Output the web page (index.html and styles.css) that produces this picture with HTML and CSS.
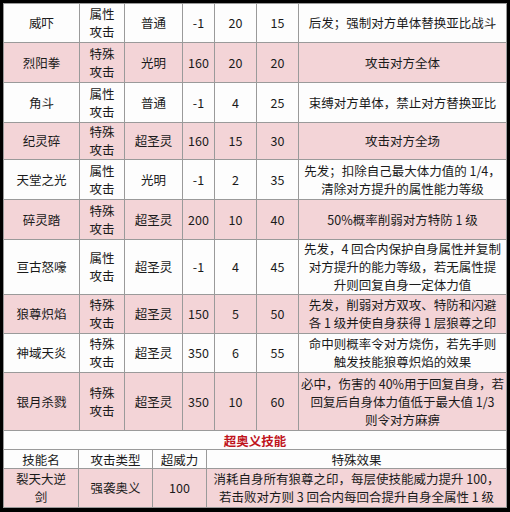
FILE: index.html
```html
<!DOCTYPE html>
<html>
<head>
<meta charset="utf-8">
<link rel="stylesheet" href="styles.css">
</head>
<body>
<div class="frame">
<table class="skills">
<colgroup>
<col class="c1"><col class="c2"><col class="c3"><col class="c4"><col class="c5"><col class="c6"><col class="c7">
</colgroup>
<tr class="w h39"><td>威吓</td><td>属性<br>攻击</td><td>普通</td><td>-1</td><td>20</td><td>15</td><td class="eff">后发；强制对方单体替换亚比战斗</td></tr>
<tr class="p h40"><td>烈阳拳</td><td>特殊<br>攻击</td><td>光明</td><td>160</td><td>20</td><td>20</td><td class="eff">攻击对方全体</td></tr>
<tr class="w h40"><td>角斗</td><td>属性<br>攻击</td><td>普通</td><td>-1</td><td>4</td><td>25</td><td class="eff">束缚对方单体，禁止对方替换亚比</td></tr>
<tr class="p h35"><td>纪灵碎</td><td>特殊<br>攻击</td><td>超圣灵</td><td>160</td><td>15</td><td>30</td><td class="eff">攻击对方全场</td></tr>
<tr class="w h40"><td>天堂之光</td><td>属性<br>攻击</td><td>光明</td><td>-1</td><td>2</td><td>35</td><td class="eff">先发；扣除自己最大体力值的 1/4，<br>清除对方提升的属性能力等级</td></tr>
<tr class="p h40"><td>碎灵踏</td><td>特殊<br>攻击</td><td>超圣灵</td><td>200</td><td>10</td><td>40</td><td class="eff">50%概率削弱对方特防 1 级</td></tr>
<tr class="w h55"><td>亘古怒嚎</td><td>属性<br>攻击</td><td>超圣灵</td><td>-1</td><td>4</td><td>45</td><td class="eff">先发，4 回合内保护自身属性并复制<br>对方提升的能力等级，若无属性提<br>升则回复自身一定体力值</td></tr>
<tr class="p h39"><td>狼尊炽焰</td><td>特殊<br>攻击</td><td>超圣灵</td><td>150</td><td>5</td><td>50</td><td class="eff">先发，削弱对方双攻、特防和闪避<br>各 1 级并使自身获得 1 层狼尊之印</td></tr>
<tr class="w h39"><td>神域天炎</td><td>特殊<br>攻击</td><td>超圣灵</td><td>350</td><td>6</td><td>55</td><td class="eff">命中则概率令对方烧伤，若先手则<br>触发技能狼尊炽焰的效果</td></tr>
<tr class="p h58"><td>银月杀戮</td><td>特殊<br>攻击</td><td>超圣灵</td><td>350</td><td>10</td><td>60</td><td class="eff">必中，伤害的 40%用于回复自身，若<br>回复后自身体力值低于最大值 1/3<br>则令对方麻痹</td></tr>
<tr class="w h19"><td colspan="7" class="title">超奥义技能</td></tr>
</table>
<table class="ult">
<colgroup>
<col class="u1"><col class="u2"><col class="u3"><col class="u4">
</colgroup>
<tr class="w h19"><td>技能名</td><td>攻击类型</td><td>超威力</td><td>特殊效果</td></tr>
<tr class="p h39"><td>裂天大逆<br>剑</td><td>强袭奥义</td><td>100</td><td class="eff">消耗自身所有狼尊之印，每层使技能威力提升 100，<br>若击败对方则 3 回合内每回合提升自身全属性 1 级</td></tr>
</table>
</div>
</body>
</html>
```
FILE: styles.css
```css
html, body {
  margin: 0;
  padding: 0;
  background: #000;
}
body {
  width: 510px;
  height: 512px;
  overflow: hidden;
}
.frame {
  padding: 3px 0 0 3px;
}
table {
  border-collapse: collapse;
  table-layout: fixed;
  width: 503px;
  font-family: "Noto Sans CJK SC", "Noto Sans", sans-serif;
  font-size: 12.5px;
  line-height: 18px;
  color: #1a1a1a;
}
td {
  border: 1px solid #9a9a9a;
  padding: 0;
  text-align: center;
  vertical-align: middle;
  white-space: nowrap;
  overflow: hidden;
}
.c1 { width: 76px; }
.c2 { width: 45px; }
.c3 { width: 58px; }
.c4 { width: 32px; }
.c5 { width: 42px; }
.c6 { width: 42px; }
.c7 { width: 208px; }
.u1 { width: 75px; }
.u2 { width: 74px; }
.u3 { width: 54px; }
.u4 { width: 300px; }
.w td { background: #fdfdfd; }
.p td { background: #f3d4d7; }
.h19 { height: 19px; }
.h35 { height: 35px; }
.h39 { height: 39px; }
.h40 { height: 40px; }
.h55 { height: 55px; }
.h58 { height: 58px; }
.h19 td { line-height: 17px; }
.title {
  color: #c0141c;
  font-weight: bold;
}
.ult {
  margin-top: -1px;
}
```
